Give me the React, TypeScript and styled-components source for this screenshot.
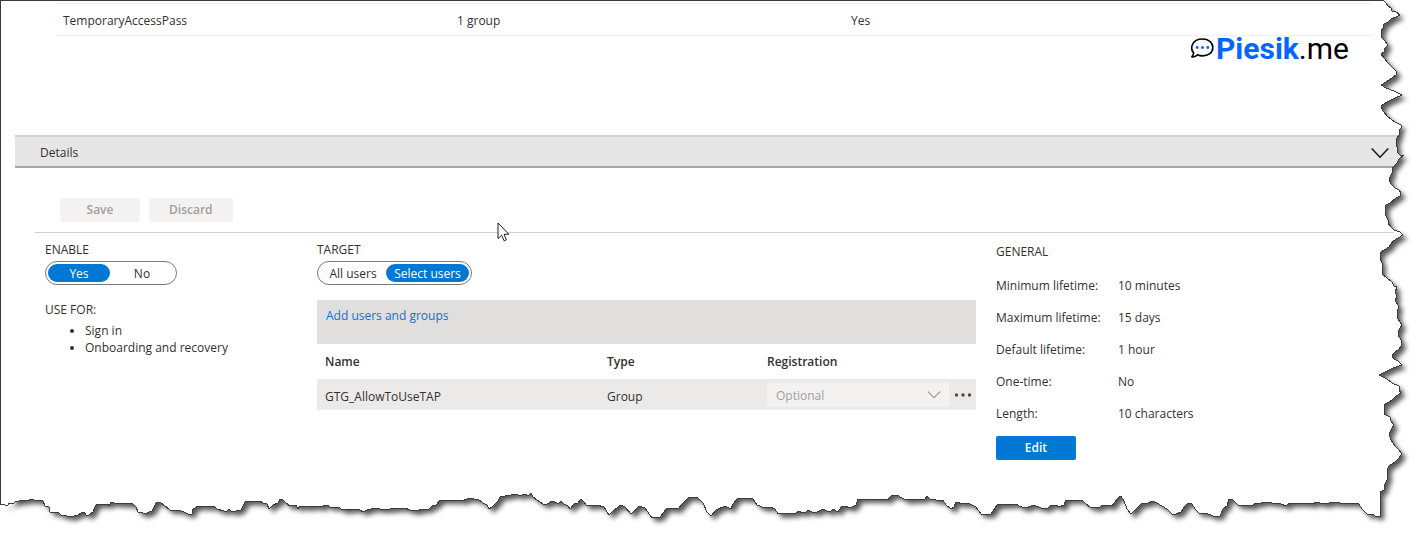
import React from "react";
import styled, { createGlobalStyle, css } from "styled-components";

const GlobalStyle = createGlobalStyle`
  *, *::before, *::after { box-sizing: border-box; }
  body {
    margin: 0;
    background: #ffffff;
    color: #323130;
    font-family: "Segoe UI", "Open Sans", "Noto Sans", sans-serif;
    font-size: 12px;
    line-height: 16px;
  }
  button, input, select { font: inherit; color: inherit; }
`;

const Page = styled.main`
  position: relative;
  min-width: 1100px;
  padding: 2px 0 81px;
  border-top: 1px solid #3c3c3c;
  border-left: 1px solid #3c3c3c;
`;

const MethodTable = styled.table`
  width: calc(100% - 107px);
  margin-left: 55px;
  table-layout: fixed;
  border-collapse: collapse;
  border-top: 1px solid #f1efee;
  border-bottom: 1px solid #f1efee;
`;

const MethodCell = styled.td<{ $wide?: boolean }>`
  width: ${({ $wide }) => ($wide ? "auto" : "394px")};
  height: 32px;
  padding: 2px 7px 0;
`;

const BrandRow = styled.div`
  display: flex;
  justify-content: flex-end;
  height: 99px;
  padding-right: 77px;
`;

const Brand = styled.div`
  display: flex;
  align-items: flex-start;
  gap: 2px;
  height: 32px;
  font-family: Roboto, sans-serif;
  font-size: 30px;
  line-height: 26px;
  color: #000000;

  svg { margin-top: 2px; }
  strong { color: #0566ff; font-weight: 700; }
`;

const DetailsBar = styled.button`
  display: flex;
  align-items: center;
  justify-content: space-between;
  width: calc(100% - 14px);
  height: 33px;
  margin-left: 14px;
  padding: 3px 37px 0 25px;
  border: 0;
  border-top: 2px solid #d2d2d2;
  border-bottom: 2px solid #a6a6a6;
  background: #e6e6e6;
  text-align: left;
`;

const Toolbar = styled.div`
  display: flex;
  gap: 9px;
  margin: 0 32px 0 34px;
  padding: 30px 25px 10px;
  border-bottom: 1px solid #d2d0ce;
`;

const Button = styled.button<{ $primary?: boolean }>`
  min-width: 80px;
  height: 24px;
  padding: 0 20px;
  border: 0;
  border-radius: 2px;
  font-weight: 600;
  line-height: 24px;
  ${({ $primary }) =>
    $primary
      ? css`
          background: #0078d4;
          color: #ffffff;
        `
      : css`
          background: #f3f2f1;
          color: #a19f9d;
        `}
`;

const Columns = styled.div`
  display: grid;
  grid-template-columns: 272px minmax(0, 1fr) 430px;
  padding-left: 44px;
`;

const EnableColumn = styled.section`
  padding-top: 8px;
`;

const TargetColumn = styled.section`
  padding: 8px 20px 0 0;
`;

const GeneralColumn = styled.section`
  padding-top: 11px;
`;

const ToggleGroup = styled.fieldset`
  margin: 0;
  padding: 0;
  border: 0;
`;

const Heading = styled.legend`
  height: 20px;
  padding: 0;
  line-height: 18px;
`;

const Track = styled.div<{ $columns: string }>`
  display: inline-grid;
  grid-template-columns: ${({ $columns }) => $columns};
  height: 24px;
  padding: 2px;
  border: 1px solid #7a7978;
  border-radius: 12px;
  vertical-align: top;
`;

const ToggleOption = styled.label`
  padding-top: 2px;
  border-radius: 9px;
  line-height: 16px;
  text-align: center;
  white-space: nowrap;

  &:has(input:checked) {
    background: #0078d4;
    color: #ffffff;
  }
  input {
    position: absolute;
    opacity: 0;
    pointer-events: none;
  }
`;

const UseFor = styled.p`
  margin: 17px 0 4px;
`;

const UseList = styled.ul`
  margin: 0;
  padding-left: 40px;
  line-height: 17px;
`;

const AddBar = styled.div`
  height: 44px;
  margin-top: 15px;
  padding: 8px 9px;
  background: #e0dfde;
`;

const AddLink = styled.a`
  color: #156fce;
  text-decoration: none;
`;

const TargetTable = styled.table`
  width: 100%;
  table-layout: fixed;
  border-collapse: collapse;
  text-align: left;

  tbody { background: #ebeae9; }
`;

const HeadCell = styled.th<{ $width?: number }>`
  width: ${({ $width }) => ($width ? `${$width}px` : "auto")};
  height: 35px;
  padding: 0 0 0 8px;
  font-weight: 600;

  & + & { padding-left: 0; }
`;

const BodyCell = styled.td`
  height: 31px;
  padding: 5px 0 0 8px;

  & + & { padding-left: 0; }
`;

const ControlCell = styled.td`
  height: 31px;
  padding: 0;
`;

const RegistrationControls = styled.div`
  display: flex;
  align-items: center;
  gap: 5px;
`;

const SelectBox = styled.div`
  display: grid;
  align-items: center;
  width: 182px;

  & > * { grid-area: 1 / 1; }
  svg {
    justify-self: end;
    margin-right: 8px;
    pointer-events: none;
  }
`;

const Select = styled.select`
  width: 100%;
  height: 24px;
  padding: 2px 9px 0;
  appearance: none;
  border: 0;
  border-radius: 2px;
  background: #f3f2f1;
  color: #a19f9d;
  opacity: 1;
`;

const MoreButton = styled.button`
  display: flex;
  align-items: center;
  height: 24px;
  padding: 0;
  border: 0;
  background: transparent;
`;

const GeneralTitle = styled.h2`
  margin: 0 0 10px;
  font-size: 12px;
  font-weight: 400;
  line-height: 16px;
`;

const Settings = styled.dl`
  display: grid;
  grid-template-columns: 122px 1fr;
  margin: 0 0 6px;
  line-height: 32px;

  dd { margin: 0; }
`;

const Pointer = styled.svg`
  position: absolute;
  top: 221px;
  left: 496px;
`;

const TornPaper = styled.svg`
  position: absolute;
  top: -1px;
  left: -1px;
  width: calc(100% + 1px);
  height: calc(100% + 1px);
  pointer-events: none;
`;

const rightEdge =
  "1383,0 1386,3 1388,6 1391,8 1392,11 1396,12 1400,15 1396,17 1391,19 1388,22 1384,24 1383,28 1381,31 1382,35 1381,37 1384,40 1388,45 1385,48 1384,52 1381,54 1384,58 1388,63 1393,68 1396,71 1397,74 1392,78 1386,82 1381,85 1386,88 1394,91 1402,95 1395,98 1387,102 1381,106 1383,111 1388,117 1395,122 1401,125 1401,128 1399,130 1399,135 1397,138 1396,142 1397,147 1397,152 1400,155 1404,155 1399,159 1397,163 1392,168 1392,173 1389,179 1391,184 1395,188 1399,190 1401,193 1400,196 1396,198 1390,203 1386,205 1385,210 1386,216 1388,220 1388,223 1391,227 1394,230 1400,232 1403,235 1398,238 1393,241 1389,247 1384,250 1380,253 1380,258 1382,263 1382,274 1387,278 1392,282 1394,286 1397,287 1395,292 1397,296 1395,301 1399,306 1397,312 1398,319 1402,325 1399,330 1398,335 1401,340 1402,345 1398,350 1394,353 1392,356 1394,359 1398,361 1402,365 1393,368 1385,372 1379,375 1387,379 1392,383 1399,386 1399,390 1401,393 1396,396 1392,400 1384,405 1384,414 1390,417 1391,421 1394,425 1391,430 1389,434 1391,440 1395,446 1399,450 1402,454 1399,458 1395,462 1389,466 1387,470 1388,474 1387,480 1385,484 1384,490 1380,492 1380,516";

const bottomEdge =
  "1375,516 1373,514 1368,515 1362,509 1359,504 1355,503 1340,503 1333,502 1325,504 1320,503 1317,502 1312,504 1305,503 1290,503 1286,506 1281,504 1278,503 1272,503 1268,502 1263,502 1259,504 1256,503 1252,506 1238,505 1235,502 1232,499 1229,499 1227,506 1223,509 1220,516 1213,516 1206,513 1199,513 1195,509 1192,504 1188,503 1185,506 1181,512 1176,514 1172,514 1167,509 1162,506 1157,503 1153,501 1148,503 1141,504 1137,508 1131,514 1127,509 1124,501 1121,496 1117,499 1112,506 1103,505 1098,508 1090,507 1086,504 1082,500 1066,500 1064,505 1059,507 1056,505 1051,505 1048,508 1041,508 1034,505 1025,508 1019,506 1017,504 997,505 991,514 981,514 976,507 970,504 966,503 963,504 956,502 954,507 951,509 946,505 943,500 937,501 935,499 930,499 927,496 925,499 906,500 902,498 897,495 891,496 888,500 883,499 858,499 856,505 850,508 845,506 841,507 838,512 833,509 830,512 827,511 823,509 817,512 812,512 808,510 806,512 802,513 799,511 796,513 778,514 775,509 770,507 765,508 757,505 753,499 742,498 738,498 733,504 731,509 725,506 716,510 711,516 707,512 703,503 698,498 689,497 682,504 678,509 667,508 660,517 652,518 645,508 639,506 636,509 631,514 625,507 621,505 618,507 613,511 609,515 604,507 597,505 587,506 584,502 581,499 578,503 574,504 570,509 568,506 564,504 561,501 559,503 557,503 552,501 547,504 543,504 537,500 533,497 531,493 529,495 527,495 524,494 522,495 519,496 517,494 505,496 500,497 498,501 492,507 489,509 487,505 483,503 478,499 475,500 473,498 467,499 462,501 460,500 440,500 436,505 432,506 429,509 422,509 417,511 410,510 405,508 395,508 390,509 380,509 375,508 367,510 363,512 359,509 352,509 343,510 338,507 330,507 328,505 325,505 322,507 315,506 308,507 300,506 298,509 296,505 290,506 286,503 283,500 280,499 278,503 273,505 269,509 267,504 263,503 260,501 257,502 253,501 245,502 243,506 241,510 232,512 229,509 227,511 224,511 217,509 215,507 198,506 193,509 192,514 188,514 184,512 178,510 170,510 164,505 160,502 157,502 154,507 152,511 149,512 146,514 143,513 138,512 136,507 133,504 114,503 111,502 109,506 108,504 97,504 95,507 93,512 89,515 86,515 84,512 81,513 78,515 75,515 73,517 67,516 61,515 59,513 50,512 49,507 45,506 43,501 34,500 31,499 29,500 19,501 15,502 14,503 9,503 8,505 5,505 3,504 0,504";

const outline = `${rightEdge} ${bottomEdge}`;

const Chevron = ({ width, color }: { width: number; color: string }) => (
  <svg width={width} height="12" viewBox={`0 0 ${width} 12`} aria-hidden="true">
    <path
      d={width > 16 ? "M.7 1.5 9 10.3l8.3-8.8" : "M.8 2.5 7 8.7l6.2-6.2"}
      fill="none"
      stroke={color}
      strokeWidth={width > 16 ? 1.4 : 1.1}
    />
  </svg>
);

const ChatMark = () => (
  <svg width="23" height="21" viewBox="0 0 23 21" aria-hidden="true">
    <path
      d="M2.7 15.1C.7 12.7.2 9.4 1.5 6.5 3.1 2.8 7.1 1 11.5 1c5.9 0 10.3 3.3 10.3 8.5s-4.4 8.4-10.3 8.4c-2 0-3.5-.4-4.9-1.1-1.6 1.4-3.5 2.2-5.3 2.2-.4 0-.5-.5-.2-.8.9-.9 1.4-1.9 1.6-3.1Z"
      fill="none"
      stroke="#000"
      strokeWidth="1.6"
      strokeLinejoin="round"
    />
    <circle cx="6.2" cy="9.5" r="1.4" fill="#0566ff" />
    <circle cx="11.5" cy="9.5" r="1.4" fill="#0566ff" />
    <circle cx="16.8" cy="9.5" r="1.4" fill="#0566ff" />
  </svg>
);

const settings = [
  ["Minimum lifetime:", "10 minutes"],
  ["Maximum lifetime:", "15 days"],
  ["Default lifetime:", "1 hour"],
  ["One-time:", "No"],
  ["Length:", "10 characters"],
];

export default function App() {
  return (
    <>
      <GlobalStyle />
      <Page>
        <MethodTable>
          <tbody>
            <tr>
              <MethodCell>TemporaryAccessPass</MethodCell>
              <MethodCell>1 group</MethodCell>
              <MethodCell $wide>Yes</MethodCell>
            </tr>
          </tbody>
        </MethodTable>

        <BrandRow>
          <Brand>
            <ChatMark />
            <span>
              <strong>Piesik</strong>.me
            </span>
          </Brand>
        </BrandRow>

        <DetailsBar type="button" aria-expanded="true">
          Details
          <Chevron width={18} color="#111111" />
        </DetailsBar>

        <Toolbar>
          <Button type="button" disabled>Save</Button>
          <Button type="button" disabled>Discard</Button>
        </Toolbar>

        <Columns>
          <EnableColumn>
            <ToggleGroup>
              <Heading>ENABLE</Heading>
              <Track $columns="62px 64px">
                <ToggleOption>
                  <input type="radio" name="enable" defaultChecked />
                  Yes
                </ToggleOption>
                <ToggleOption>
                  <input type="radio" name="enable" />
                  No
                </ToggleOption>
              </Track>
            </ToggleGroup>
            <UseFor>USE FOR:</UseFor>
            <UseList>
              <li>Sign in</li>
              <li>Onboarding and recovery</li>
            </UseList>
          </EnableColumn>

          <TargetColumn>
            <ToggleGroup>
              <Heading>TARGET</Heading>
              <Track $columns="66px 83px">
                <ToggleOption>
                  <input type="radio" name="target" />
                  All users
                </ToggleOption>
                <ToggleOption>
                  <input type="radio" name="target" defaultChecked />
                  Select users
                </ToggleOption>
              </Track>
            </ToggleGroup>
            <AddBar>
              <AddLink href="#add">Add users and groups</AddLink>
            </AddBar>
            <TargetTable>
              <thead>
                <tr>
                  <HeadCell>Name</HeadCell>
                  <HeadCell $width={160}>Type</HeadCell>
                  <HeadCell $width={209}>Registration</HeadCell>
                </tr>
              </thead>
              <tbody>
                <tr>
                  <BodyCell>GTG_AllowToUseTAP</BodyCell>
                  <BodyCell>Group</BodyCell>
                  <ControlCell>
                    <RegistrationControls>
                      <SelectBox>
                        <Select aria-label="Registration" disabled>
                          <option>Optional</option>
                        </Select>
                        <Chevron width={14} color="#a19f9d" />
                      </SelectBox>
                      <MoreButton type="button" aria-label="More options">
                        <svg width="18" height="4" viewBox="0 0 18 4" fill="#4a4846">
                          <circle cx="2.5" cy="2" r="1.7" />
                          <circle cx="9" cy="2" r="1.7" />
                          <circle cx="15.5" cy="2" r="1.7" />
                        </svg>
                      </MoreButton>
                    </RegistrationControls>
                  </ControlCell>
                </tr>
              </tbody>
            </TargetTable>
          </TargetColumn>

          <GeneralColumn>
            <GeneralTitle>GENERAL</GeneralTitle>
            <Settings>
              {settings.map(([name, value]) => (
                <React.Fragment key={name}>
                  <dt>{name}</dt>
                  <dd>{value}</dd>
                </React.Fragment>
              ))}
            </Settings>
            <Button type="button" $primary>Edit</Button>
          </GeneralColumn>
        </Columns>

        <Pointer width="13" height="20" viewBox="0 0 13 20" aria-hidden="true">
          <path
            d="M1 1v15.6l3.6-3.4 2.5 5.6 2.3-1-2.4-5.5h4.9Z"
            fill="#fff"
            stroke="#1b1b2b"
            strokeWidth="1"
          />
        </Pointer>

        <TornPaper viewBox="0 0 1426 541" preserveAspectRatio="none" aria-hidden="true">
          <defs>
            <filter id="soften" x="-5%" y="-5%" width="110%" height="110%">
              <feGaussianBlur stdDeviation="2.8" />
            </filter>
            <clipPath id="beyond">
              <path clipRule="evenodd" d={`M0 0H1430V545H0Z M0 0L${outline}Z`} />
            </clipPath>
          </defs>
          <g clipPath="url(#beyond)">
            <rect width="1430" height="545" fill="#ffffff" />
            <polygon
              points={`12,0 ${outline} 12,504`}
              fill="#000000"
              fillOpacity="0.66"
              transform="translate(4 4)"
              filter="url(#soften)"
            />
          </g>
          <polyline
            points={outline}
            fill="none"
            stroke="#3c3c3c"
            strokeWidth="1"
            shapeRendering="crispEdges"
            vectorEffect="non-scaling-stroke"
          />
        </TornPaper>
      </Page>
    </>
  );
}
